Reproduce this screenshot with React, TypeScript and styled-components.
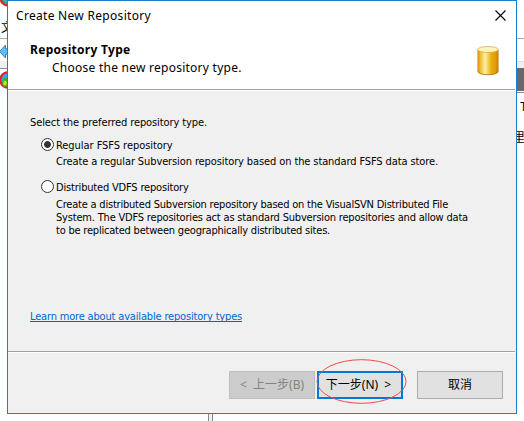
import React from 'react';
import styled, { createGlobalStyle } from 'styled-components';

const Global = createGlobalStyle`
  * { box-sizing: border-box; }
  body { margin: 0; background: #fff; overflow: hidden; }
`;

const body = '"DejaVu Sans Condensed", "DejaVu Sans", sans-serif';
const heading = '"Noto Sans", "Noto Sans CJK SC", sans-serif';

const Desktop = styled.main`
  width: 524px;
  height: 421px;
  display: grid;
  grid-template: 414px 7px / 7px 510px 7px;
  overflow: hidden;
  background: #fff;
`;

const Strip = styled.div`
  display: flex;
  flex-direction: column;
  overflow: hidden;
  svg { display: block; flex: none; }
`;

const Band = styled.div<{ $h: number; $color?: string }>`
  flex: none;
  height: ${(p) => p.$h}px;
  background: ${(p) => p.$color ?? 'transparent'};
`;

const Sliver = styled.span<{ $size: number; $shift: number }>`
  height: 17px;
  flex: none;
  margin-left: ${(p) => p.$shift}px;
  font: ${(p) => p.$size}px/17px "Noto Sans CJK SC", sans-serif;
  white-space: nowrap;
  color: #000;
`;

const Splitter = styled.div`
  grid-column: 2;
  grid-row: 2;
  width: 5px;
  margin-left: 201px;
  border: solid #828790;
  border-width: 0 1px;
  background: #f0f0f0;
`;

const Dialog = styled.section`
  display: flex;
  flex-direction: column;
  border: 1px solid #1a7fd0;
  background: #f0f0f0;
`;

const Header = styled.header`
  height: 88px;
  background: #fff;
`;

const TitleBar = styled.div`
  height: 30px;
  padding: 6px 10px 0 8px;
  display: flex;
  justify-content: space-between;
  svg { margin-top: 3px; }
`;

const Banner = styled.div`
  display: flex;
  justify-content: space-between;
  padding: 10px 17px 0 22px;
  svg { margin-top: 5px; }
`;

const Text = styled.span<{ $ls: number }>`
  display: block;
  white-space: nowrap;
  letter-spacing: ${(p) => p.$ls}px;
`;

const Title = styled(Text)`
  font: 12px/17px ${heading};
  color: #000;
`;

const BannerTitle = styled(Title)`
  font-weight: 700;
`;

const BannerHint = styled(Title)`
  padding: 1px 0 0 22px;
`;

const Divider = styled.hr`
  flex: none;
  width: 507px;
  height: 2px;
  margin: 0;
  border: 0;
  border-top: 1px solid #a0a0a0;
  background: #fff;
`;

const Content = styled.div`
  height: 260px;
  padding: 25px 22px 0 22px;
  font: 11px/13px ${body};
  color: #000;
`;

const Choice = styled.label<{ $top: number }>`
  display: flex;
  align-items: flex-start;
  gap: 2px;
  height: 13px;
  margin: ${(p) => p.$top}px 0 0 11px;
  ${Text} { padding-top: 1px; }
`;

const Radio = styled.span<{ $on?: boolean }>`
  width: 13px;
  height: 13px;
  border: 1px solid #333;
  border-radius: 50%;
  background: ${(p) => (p.$on ? 'radial-gradient(circle, #333 3px, #fff 3.8px)' : '#fff')};
`;

const Description = styled.div<{ $top: number }>`
  margin: ${(p) => p.$top}px 0 0 26px;
`;

const Link = styled.a`
  display: block;
  width: 212px;
  height: 12px;
  margin-top: 73px;
  border-bottom: 1px solid #0066cc;
  color: #0066cc;
`;

const Footer = styled.footer`
  flex: 1;
  display: flex;
  justify-content: flex-end;
  padding: 18px 13px 0 0;
`;

const Button = styled.button<{ $gap?: number }>`
  width: 86px;
  height: 28px;
  margin: 0 0 0 ${(p) => p.$gap ?? 2}px;
  padding: 0 0 1px;
  border: 1px solid #adadad;
  background: #e1e1e1;
  color: #000;
  font: 12px/18px "Noto Sans", "Noto Sans CJK SC", sans-serif;
  white-space: pre;
  &:disabled {
    border-color: #bfbfbf;
    background: #ccc;
    color: #838383;
  }
`;

const PrimaryButton = styled(Button)`
  padding-right: 3px;
  border: 2px solid #0078d7;
`;

const Highlighted = styled.div`
  position: relative;
  height: 28px;
  svg {
    position: absolute;
    left: 0;
    top: -13px;
    pointer-events: none;
  }
`;

function Globe() {
  return (
    <svg width="7" height="18" viewBox="0 0 7 18">
      <circle cx="8" cy="9" r="7.7" fill="#36a9d5" stroke="#d9252c" strokeWidth="2.2" />
      <path d="M2 13C2 8 4 7 8 7v9H4Z" fill="#43a72b" />
      <ellipse cx="5" cy="12" rx="1.8" ry="2.6" fill="#d5df24" />
    </svg>
  );
}

function Cylinder() {
  return (
    <svg width="22" height="30" viewBox="0 0 22 30">
      <defs>
        <linearGradient id="side">
          <stop offset="0" stopColor="#d18a05" />
          <stop offset=".12" stopColor="#f0b72a" />
          <stop offset=".36" stopColor="#fbf0a8" />
          <stop offset=".48" stopColor="#f5d866" />
          <stop offset=".64" stopColor="#eab010" />
          <stop offset=".88" stopColor="#e19a00" />
          <stop offset="1" stopColor="#b57905" />
        </linearGradient>
      </defs>
      <path d="M.5 3.500v21.700c0 2.200 4.200 3.600 10.500 3.600s10.500-1.400 10.500-3.600V3.500Z" fill="url(#side)" />
      <path d="M.8 25.500c.8 2 4.700 3.200 10.200 3.200s9.400-1.200 10.200-3.200" fill="none" stroke="#ad7814" strokeWidth=".9" />
      <ellipse cx="11" cy="3.500" rx="10.300" ry="3" fill="#fdf5b8" stroke="#d2a544" strokeWidth=".7" />
    </svg>
  );
}

export default function App() {
  return (
    <>
      <Global />
      <Desktop>
        <Strip>
          <svg width="7" height="7" viewBox="0 0 7 7">
            <circle cx="8" cy="-2" r="7.500" fill="#43a72b" stroke="#d9252c" strokeWidth="2.200" />
            <path d="M3 0h4v3H5Z" fill="#36a9d5" />
          </svg>
          <Band $h={11} />
          <Sliver $size={12} $shift={1}>文</Sliver>
          <Band $h={3} />
          <Band $h={1} $color="#a9a9a9" />
          <Band $h={5} />
          <svg width="7" height="15" viewBox="0 0 7 15">
            <path d="M5.500 1v3.800h4v5.400h-4V14L-.5 7.500Z" fill="#64bdf0" stroke="#278acb" />
          </svg>
          <Band $h={2} />
          <Band $h={7} $color="#f0f0f0" />
          <Band $h={1} $color="#8b8f98" />
          <Band $h={2} />
          <Globe />
        </Strip>

        <Dialog>
          <Header>
            <TitleBar>
              <Title $ls={0.3}>Create New Repository</Title>
              <svg width="11" height="11" viewBox="0 0 11 11">
                <path d="M.5.5l10 10M10.500.5l-10 10" stroke="#000" strokeWidth="1.100" />
              </svg>
            </TitleBar>
            <Banner>
              <div>
                <BannerTitle $ls={0.3}>Repository Type</BannerTitle>
                <BannerHint $ls={0.25}>Choose the new repository type.</BannerHint>
              </div>
              <Cylinder />
            </Banner>
          </Header>
          <Divider />
          <Content>
            <Text $ls={-0.09}>Select the preferred repository type.</Text>
            <Choice $top={9}>
              <Radio $on />
              <Text $ls={-0.05}>Regular FSFS repository</Text>
            </Choice>
            <Description $top={4}>
              <Text $ls={-0.108}>Create a regular Subversion repository based on the standard FSFS data store.</Text>
            </Description>
            <Choice $top={12}>
              <Radio />
              <Text $ls={-0.18}>Distributed VDFS repository</Text>
            </Choice>
            <Description $top={5}>
              <Text $ls={-0.208}>Create a distributed Subversion repository based on the VisualSVN Distributed File</Text>
              <Text $ls={-0.187}>System. The VDFS repositories act as standard Subversion repositories and allow data</Text>
              <Text $ls={-0.212}>to be replicated between geographically distributed sites.</Text>
            </Description>
            <Link>
              <Text $ls={-0.172}>Learn more about available repository types</Text>
            </Link>
          </Content>
          <Divider />
          <Footer>
            <Button disabled>{'<  上一步(B)'}</Button>
            <Highlighted>
              <PrimaryButton>{'下一步(N)  >'}</PrimaryButton>
              <svg width="94" height="48" viewBox="0 0 94 48">
                <ellipse cx="46.500" cy="23.500" rx="44.500" ry="21.800" fill="none" stroke="#f04a4a" strokeWidth="1" />
              </svg>
            </Highlighted>
            <Button $gap={14}>取消</Button>
          </Footer>
        </Dialog>

        <Strip>
          <Band $h={38} />
          <Band $h={1} $color="#a9a9a9" />
          <Band $h={22} />
          <Band $h={1} $color="#dcdcdc" />
          <Band $h={6} $color="#f0f0f0" />
          <Band $h={23} $color="#696969" />
          <Band $h={1} />
          <Band $h={1} $color="#828790" />
          <Band $h={4} />
          <Sliver $size={12} $shift={3}>T</Sliver>
          <Band $h={14} />
          <Sliver $size={12} $shift={-4}>里</Sliver>
        </Strip>
        <Splitter />
      </Desktop>
    </>
  );
}
